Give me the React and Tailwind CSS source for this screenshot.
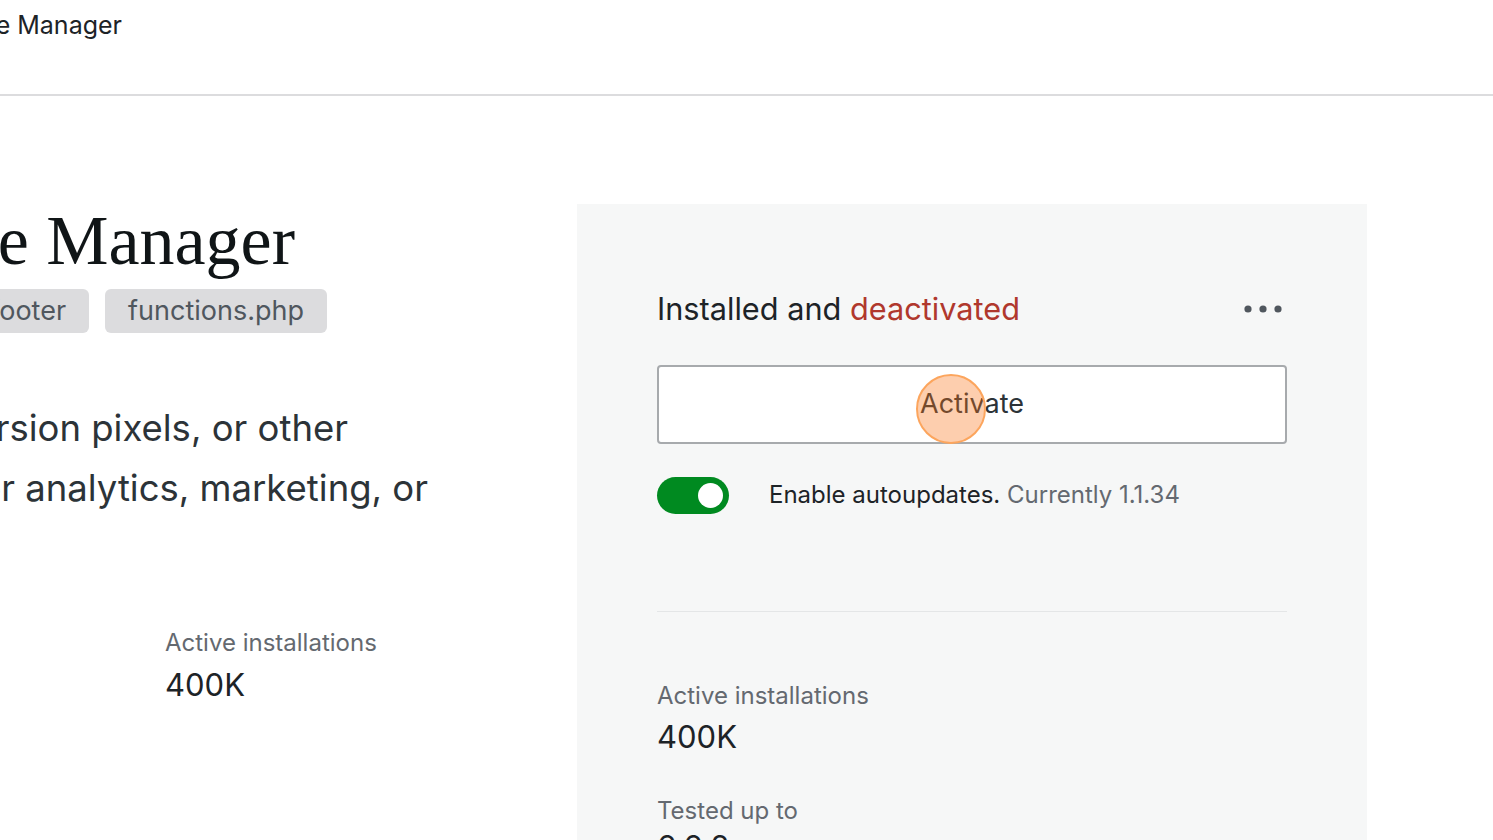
export default function App() {
  return (
    <div className="w-[1493px] h-[840px] overflow-hidden bg-white font-['Inter',sans-serif] text-[#1d2327]">
      <header className="h-[96px] border-b-2 border-[#dcdcde] pt-[10px]">
        <div className="w-[122px] flex justify-end whitespace-nowrap text-[25px] leading-[30px] text-[#1d2327]">
          <span className="shrink-0">Header &amp; Footer Code Manager</span>
        </div>
      </header>
      <div className="flex">
        <div className="w-[577px] shrink-0">
          <div className="mt-[110px] w-[295px] flex justify-end whitespace-nowrap font-['Liberation_Serif',serif] text-[70px] leading-[70px] text-[#101517]">
            <h1 className="shrink-0">Header &amp; Footer Code Manager</h1>
          </div>
          <div className="mt-[13px] w-[327px] flex justify-end gap-[16px] whitespace-nowrap">
            <span className="shrink-0 h-[44px] px-[23px] rounded-[6px] bg-[#dcdcde] text-[#50575e] text-[27px] leading-[44px]">header</span>
            <span className="shrink-0 h-[44px] px-[23px] rounded-[6px] bg-[#dcdcde] text-[#50575e] text-[27px] leading-[44px]">footer</span>
            <span className="shrink-0 h-[44px] px-[23px] rounded-[6px] bg-[#dcdcde] text-[#50575e] text-[27px] leading-[44px]">functions.php</span>
          </div>
          <div className="mt-[65px] text-[36.5px] leading-[60px] text-[#2c3338] whitespace-nowrap">
            <div className="w-[348px] flex justify-end"><span className="shrink-0">Easily add tracking code, conversion pixels, or other</span></div>
            <div className="w-[428px] flex justify-end"><span className="shrink-0">scripts required for analytics, marketing, or</span></div>
          </div>
          <div className="mt-[110px] ml-[165px]">
            <div className="text-[24px] leading-[30px] text-[#646970]">Active installations</div>
            <div className="mt-[7px] text-[31px] leading-[40px] text-[#1d2327]">400K</div>
          </div>
        </div>
        <aside className="w-[790px] shrink-0 bg-[#f6f7f7] mt-[108px] h-[636px] px-[80px] pt-[85px]">
          <div className="flex items-center justify-between h-[40px]">
            <div className="text-[30.7px] leading-[40px] text-[#1d2327]">
              Installed and <span className="text-[#b0382d]">deactivated</span>
            </div>
            <svg width="38" height="8" viewBox="0 0 38 8" className="mr-[5px]">
              <circle cx="4" cy="4" r="3.6" fill="#50575e" />
              <circle cx="19" cy="4" r="3.6" fill="#50575e" />
              <circle cx="34" cy="4" r="3.6" fill="#50575e" />
            </svg>
          </div>
          <button className="relative mt-[36px] w-[630px] h-[79px] bg-white border-2 border-[#a7aaad] rounded-[4px] text-[27px] text-[#2c3338] flex items-center justify-center">
            Activate
            <span className="absolute left-[257px] top-[7px] w-[70px] h-[70px] rounded-full bg-[#f97316]/35 border-2 border-[#fca55d]" />
          </button>
          <div className="mt-[32px] flex items-center h-[38px]">
            <div className="w-[72px] h-[37px] rounded-full bg-[#008a20] flex items-center justify-end pr-[6px]">
              <div className="w-[25px] h-[25px] rounded-full bg-white" />
            </div>
            <div className="ml-[40px] text-[24px] leading-[30px]">
              <span className="text-[#1d2327]">Enable autoupdates.</span>{" "}
              <span className="text-[#646970]">Currently 1.1.34</span>
            </div>
          </div>
          <div className="mt-[97px] h-px bg-[#e4e6e7]" />
          <div className="mt-[69px] text-[24px] leading-[30px] text-[#646970]">Active installations</div>
          <div className="mt-[6px] text-[31px] leading-[40px] text-[#1d2327]">400K</div>
          <div className="mt-[39px] text-[24px] leading-[30px] text-[#646970]">Tested up to</div>
          <div className="mt-[1px] text-[31px] leading-[40px] text-[#1d2327]">6.6.2</div>
        </aside>
      </div>
    </div>
  );
}
